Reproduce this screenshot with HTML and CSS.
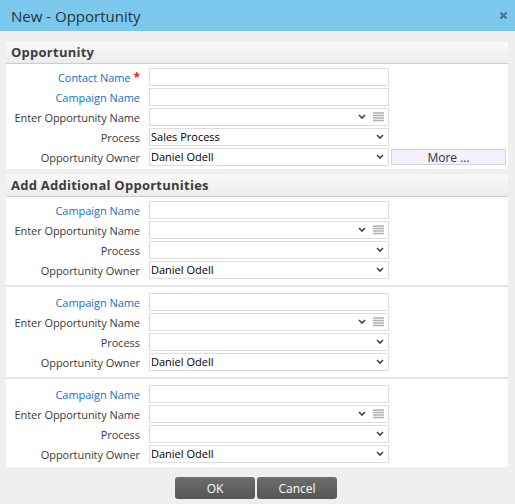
FILE: index.html
```html
<!DOCTYPE html>
<html>
<head>
  <title>New - Opportunity</title>
  <link rel="stylesheet" href="styles.css">
</head>
<body>
  <div class="titlebar">
    <span class="title">New - Opportunity</span>
    <svg class="close" width="9" height="9" viewBox="0 0 9 9"><path d="M1.500 1.500l6 6M7.500 1.500l-6 6" stroke="#54707f" stroke-width="2.200" fill="none"/></svg>
  </div>

  <div class="content">
    <div class="section">
      <h2>Opportunity</h2>
      <div class="group">
        <div class="row">
          <label class="link">Contact Name<span class="req">*</span></label>
          <input class="field" type="text">
        </div>
        <div class="row">
          <label class="link">Campaign Name</label>
          <input class="field" type="text">
        </div>
        <div class="row">
          <label>Enter Opportunity Name</label>
          <div class="field combo">
            <select></select>
            <svg class="list-icon" width="11" height="10" viewBox="0 0 11 10"><path d="M0 1h11M0 3.500h11M0 6h11M0 8.500h11" stroke="#b0b0b0" stroke-width="1.500"/></svg>
          </div>
        </div>
        <div class="row">
          <label>Process</label>
          <select class="field"><option>Sales Process</option></select>
        </div>
        <div class="row">
          <label>Opportunity Owner</label>
          <select class="field"><option>Daniel Odell</option></select>
          <button class="more">More ...</button>
        </div>
      </div>
    </div>

    <div class="section">
      <h2>Add Additional Opportunities</h2>
      <div class="group">
        <div class="row">
          <label class="link">Campaign Name</label>
          <input class="field" type="text">
        </div>
        <div class="row">
          <label>Enter Opportunity Name</label>
          <div class="field combo">
            <select></select>
            <svg class="list-icon" width="11" height="10" viewBox="0 0 11 10"><path d="M0 1h11M0 3.500h11M0 6h11M0 8.500h11" stroke="#b0b0b0" stroke-width="1.500"/></svg>
          </div>
        </div>
        <div class="row">
          <label>Process</label>
          <select class="field"></select>
        </div>
        <div class="row">
          <label>Opportunity Owner</label>
          <select class="field"><option>Daniel Odell</option></select>
        </div>
      </div>
      <div class="group divided">
        <div class="row">
          <label class="link">Campaign Name</label>
          <input class="field" type="text">
        </div>
        <div class="row">
          <label>Enter Opportunity Name</label>
          <div class="field combo">
            <select></select>
            <svg class="list-icon" width="11" height="10" viewBox="0 0 11 10"><path d="M0 1h11M0 3.500h11M0 6h11M0 8.500h11" stroke="#b0b0b0" stroke-width="1.500"/></svg>
          </div>
        </div>
        <div class="row">
          <label>Process</label>
          <select class="field"></select>
        </div>
        <div class="row">
          <label>Opportunity Owner</label>
          <select class="field"><option>Daniel Odell</option></select>
        </div>
      </div>
      <div class="group divided">
        <div class="row">
          <label class="link">Campaign Name</label>
          <input class="field" type="text">
        </div>
        <div class="row">
          <label>Enter Opportunity Name</label>
          <div class="field combo">
            <select></select>
            <svg class="list-icon" width="11" height="10" viewBox="0 0 11 10"><path d="M0 1h11M0 3.500h11M0 6h11M0 8.500h11" stroke="#b0b0b0" stroke-width="1.500"/></svg>
          </div>
        </div>
        <div class="row">
          <label>Process</label>
          <select class="field"></select>
        </div>
        <div class="row">
          <label>Opportunity Owner</label>
          <select class="field"><option>Daniel Odell</option></select>
        </div>
      </div>
    </div>
  </div>

  <div class="buttons">
    <button class="btn">OK</button>
    <button class="btn">Cancel</button>
  </div>
</body>
</html>
```

FILE: styles.css
```css
html, body {
  height: 100%;
}

body {
  margin: 0;
  background-color: #efefef;
  font-family: "Open Sans", sans-serif;
  font-size: 11px;
  color: #3a3a3a;
  overflow: hidden;
}

.titlebar {
  display: flex;
  align-items: center;
  justify-content: space-between;
  height: 31px;
  padding: 0 7px 0 11px;
  background-color: #7cc7ec;
}

.title {
  font-size: 15px;
  color: #26343c;
}

.content {
  padding: 11px 7px 0 6px;
}

.section {
  background-color: white;
  margin-bottom: 5px;
}

.section h2 {
  margin: 0;
  height: 21px;
  padding-left: 5px;
  font-size: 13px;
  line-height: 21px;
  font-weight: bold;
  letter-spacing: 0.25px;
  color: #3c3c3c;
  background: linear-gradient(#fafafa, #ececec);
  border-bottom: 1px solid #ccc;
}

.section + .section h2 {
  height: 22px;
  line-height: 23px;
}

.group {
  display: flex;
  flex-direction: column;
  gap: 2px;
  padding: 4px 0 3px;
}

.divided {
  border-top: 2px solid #e6e6e6;
  margin-top: 3px;
  padding-top: 6px;
}

.divided:last-child {
  padding-bottom: 4px;
}

.row {
  display: flex;
  align-items: center;
  height: 18px;
}

.row label {
  width: 134px;
  margin-right: 9px;
  text-align: right;
  white-space: nowrap;
  letter-spacing: -0.05px;
}

.link {
  color: #0f6fd0;
}

.req {
  margin-left: 3px;
  color: #f02020;
  font-size: 12px;
  font-weight: bold;
  line-height: 11px;
}

.field {
  box-sizing: border-box;
  width: 240px;
  height: 18px;
  margin: 0;
  padding: 0 1px;
  border: 1px solid #ddd;
  border-radius: 0;
  background-color: white;
  font-family: "Open Sans", sans-serif;
  font-size: 11px;
  line-height: 14px;
  color: black;
  outline: none;
}

select {
  appearance: none;
  background-image: url("data:image/svg+xml,%3Csvg xmlns='http://www.w3.org/2000/svg' width='8' height='6'%3E%3Cpath d='M1 1l3 3 3-3' stroke='%23444' stroke-width='1.600' fill='none'/%3E%3C/svg%3E");
  background-repeat: no-repeat;
  background-position: right 4px center;
}

.combo {
  display: flex;
  align-items: center;
  padding: 0;
}

.combo select {
  width: 220px;
  height: 16px;
  padding: 0;
  border: none;
  background-color: white;
  font-family: "Open Sans", sans-serif;
  font-size: 11px;
}

.list-icon {
  margin-left: 3px;
}

.more {
  box-sizing: border-box;
  width: 115px;
  height: 16px;
  margin-left: 2px;
  padding: 0;
  border: 1px solid #d0cfdc;
  background-color: #f3f1fd;
  font-family: "Open Sans", sans-serif;
  font-size: 12px;
  line-height: 13px;
  color: #333;
}

.buttons {
  display: flex;
  justify-content: center;
  gap: 2px;
  margin-top: 10px;
  padding-right: 3px;
}

.btn {
  width: 80px;
  height: 22px;
  padding: 0;
  border: none;
  border-radius: 3px;
  background: linear-gradient(#6e6e6e, #565656);
  font-family: "Open Sans", sans-serif;
  font-size: 12px;
  color: white;
}
```
